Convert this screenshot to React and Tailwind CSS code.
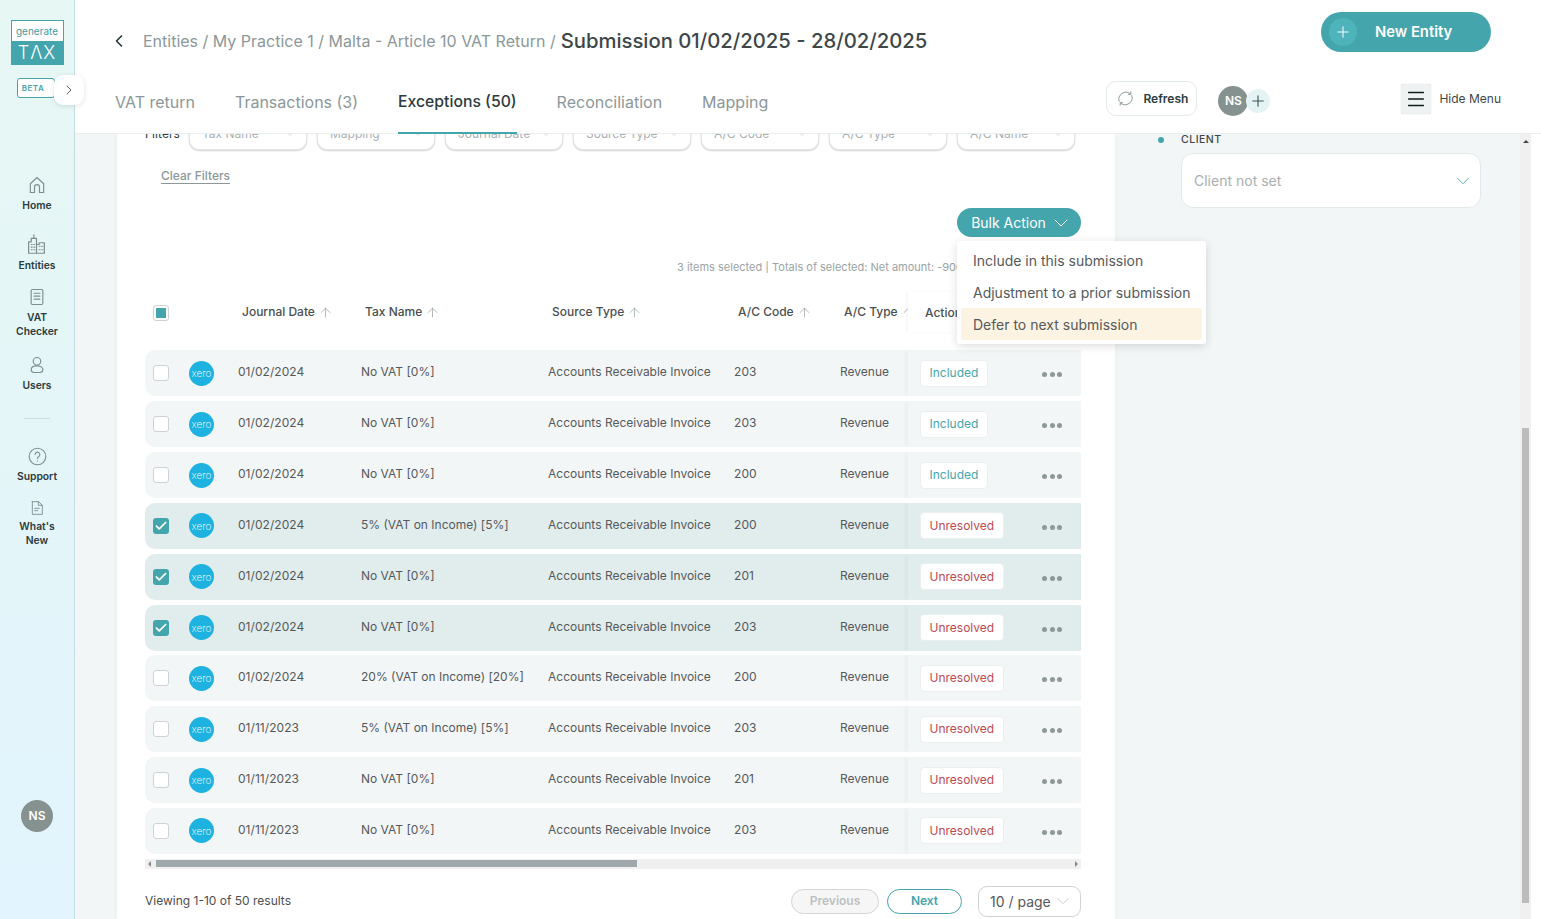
import { ArrowUp, Check, ChevronDown, ChevronLeft, ChevronRight, Menu, Plus } from "lucide-react";

const FILTERS = ["Tax Name", "Mapping", "Journal Date", "Source Type", "A/C Code", "A/C Type", "A/C Name"];

const ROWS = [
  { date: "01/02/2024", tax: "No VAT [0%]", code: "203", status: "Included" },
  { date: "01/02/2024", tax: "No VAT [0%]", code: "203", status: "Included" },
  { date: "01/02/2024", tax: "No VAT [0%]", code: "200", status: "Included" },
  { date: "01/02/2024", tax: "5% (VAT on Income) [5%]", code: "200", status: "Unresolved", checked: true },
  { date: "01/02/2024", tax: "No VAT [0%]", code: "201", status: "Unresolved", checked: true },
  { date: "01/02/2024", tax: "No VAT [0%]", code: "203", status: "Unresolved", checked: true },
  { date: "01/02/2024", tax: "20% (VAT on Income) [20%]", code: "200", status: "Unresolved" },
  { date: "01/11/2023", tax: "5% (VAT on Income) [5%]", code: "203", status: "Unresolved" },
  { date: "01/11/2023", tax: "No VAT [0%]", code: "201", status: "Unresolved" },
  { date: "01/11/2023", tax: "No VAT [0%]", code: "203", status: "Unresolved" },
];

const COLS = "grid grid-cols-[44px_49px_123px_187px_186px_106px_68px_173px] items-center";

function NavIcon({ className, children }) {
  return (
    <svg viewBox="0 0 24 24" fill="none" stroke="#7f8f91" strokeWidth="1.4" strokeLinecap="round" strokeLinejoin="round" className={className}>
      {children}
    </svg>
  );
}

function NavItem({ icon, lines, className }) {
  return (
    <div className={`flex flex-col items-center ${className}`}>
      {icon}
      <div className="mt-[3px] text-center text-[10.3px] font-semibold leading-[14px] text-[#2c3b3d]">
        {lines.map((l) => (
          <div key={l}>{l}</div>
        ))}
      </div>
    </div>
  );
}

function Sidebar() {
  return (
    <aside className="relative z-20 flex h-full w-[75px] shrink-0 flex-col items-center border-r border-[#c4dee4] bg-gradient-to-b from-[#e7f7f4] to-[#e2f4fd]">
      <div className="mt-[20px] w-[53px] border border-[#45a5ad]">
        <div className="flex h-[20px] items-center justify-center bg-white text-[10px] leading-none text-[#3f9aa2]">generate</div>
        <div className="flex h-[23px] items-center justify-center bg-[#45a5ad] text-[18px] font-light leading-none tracking-[1px] text-white">TΛX</div>
      </div>
      <div className="mt-[13px] ml-[17px] flex h-[20px] w-[38px] items-center justify-center self-start rounded-[3px] border border-[#45a5ad] bg-white pr-[6px] text-[8px] font-semibold tracking-[0.5px] text-[#45a5ad]">
        BETA
      </div>
      <div className="absolute left-[54px] top-[75px] flex h-[30px] w-[30px] items-center justify-center rounded-[9px] bg-white shadow-[0_1px_5px_rgba(0,0,0,0.12)]">
        <ChevronRight className="h-[16px] w-[16px] text-[#4a5557]" strokeWidth={1.4} />
      </div>

      <NavItem
        className="mt-[77px]"
        lines={["Home"]}
        icon={
          <NavIcon className="h-[20px] w-[20px]">
            <path d="M4 21V10.5L12 3l8 7.5V21h-5v-6.5a3 3 0 0 0-6 0V21H4z" />
          </NavIcon>
        }
      />
      <NavItem
        className="mt-[22px]"
        lines={["Entities"]}
        icon={
          <NavIcon className="h-[21px] w-[21px]">
            <path d="M9 1v4M6 5h6v17H3V9h3V5zM12 22V12h3v-2h6v12h-9z" />
            <path d="M6 12h1M9 12h1M6 15h1M9 15h1M6 18h1M9 18h1M15 14h1M18 14h1M15 18h1M18 18h1" />
          </NavIcon>
        }
      />
      <NavItem
        className="mt-[15px]"
        lines={["VAT", "Checker"]}
        icon={
          <NavIcon className="h-[20px] w-[20px]">
            <rect x="5" y="3" width="14" height="18" rx="1.5" />
            <path d="M8.5 7.5h7M8.5 11h7M8.5 14.5h7" />
          </NavIcon>
        }
      />
      <NavItem
        className="mt-[17px]"
        lines={["Users"]}
        icon={
          <NavIcon className="h-[20px] w-[20px]">
            <circle cx="12" cy="7.5" r="4.5" />
            <path d="M12 13c-4.5 0-7 2-7 4.5 0 2 1.5 3.5 3.5 3.5h7c2 0 3.5-1.5 3.5-3.5 0-2.5-2.5-4.5-7-4.5z" />
          </NavIcon>
        }
      />
      <div className="mt-[26px] h-px w-[26px] bg-[#c8dfe3]" />
      <NavItem
        className="mt-[28px]"
        lines={["Support"]}
        icon={
          <NavIcon className="h-[19px] w-[19px]">
            <circle cx="12" cy="12" r="10.5" />
            <path d="M9 9.5a3 3 0 1 1 4.6 2.5c-1 .6-1.6 1.2-1.6 2.5M12 17.5v.2" />
          </NavIcon>
        }
      />
      <NavItem
        className="mt-[17px]"
        lines={["What's", "New"]}
        icon={
          <NavIcon className="h-[16px] w-[16px]">
            <path d="M5 2.5h9.5L20 8v13.5H5v-19z" />
            <path d="M14 2.5V8h6M8.5 12.5h7M8.5 16h4.5" />
          </NavIcon>
        }
      />

      <div className="mt-auto mb-[87px] flex h-[32px] w-[32px] items-center justify-center rounded-full bg-[#869290] text-[12px] font-semibold text-white">NS</div>
    </aside>
  );
}

function Header() {
  return (
    <header className="relative z-10 h-[134px] shrink-0 border-b border-[#e9eded] bg-white">
      <div className="flex h-[81px] items-start pl-[35px] pr-[50px]">
        <div className="mt-[26px] flex items-center">
          <ChevronLeft className="-ml-[1px] mr-[14px] h-[20px] w-[20px] text-[#26393c]" strokeWidth={2} />
          <span className="text-[16px] text-[#8b9799]">Entities / My Practice 1 / Malta - Article 10 VAT Return /</span>
          <span className="ml-[5px] text-[20.25px] font-medium text-[#3d4749]">Submission 01/02/2025 - 28/02/2025</span>
        </div>
        <button className="mt-[12px] ml-auto flex h-[40px] w-[170px] items-center rounded-full bg-[#45a5ad] pl-[8px] text-[14.8px] font-semibold text-white">
          <span className="flex h-[28px] w-[28px] items-center justify-center rounded-full bg-[#4fb3bc]">
            <Plus className="h-[18px] w-[18px]" strokeWidth={1.3} />
          </span>
          <span className="ml-[18px]">New Entity</span>
        </button>
      </div>
      <div className="flex h-[53px] items-start pl-[40px] pr-[40px]">
        <nav className="relative flex h-[53px] items-start gap-[40px] pt-[9px] text-[16px] text-[#8b9799]">
          <span>VAT return</span>
          <span>Transactions (3)</span>
          <span className="relative h-[44px] border-b-[2px] border-[#45a5ad] text-[15.75px] font-medium leading-[24px] text-[#2c3b3d]">Exceptions (50)</span>
          <span>Reconciliation</span>
          <span>Mapping</span>
        </nav>
        <button className="ml-auto flex h-[35px] w-[91px] items-center rounded-[10px] border border-[#e3eaea] pl-[10px] text-[12px] font-semibold text-[#2c3b3d]">
          <svg viewBox="0 0 24 24" fill="none" stroke="#8b9799" strokeWidth="1.4" className="h-[17px] w-[17px]">
            <path d="M19 5.5A10 10 0 0 0 3.2 16.5M5 18.5A10 10 0 0 0 20.8 7.5" />
            <path d="M19.5 2v4h-4M4.5 22v-4h4" />
          </svg>
          <span className="ml-[9px]">Refresh</span>
        </button>
        <div className="ml-[21px] mt-[5px] flex items-center">
          <div className="flex h-[30px] w-[30px] items-center justify-center rounded-full bg-[#869290] text-[12px] font-semibold text-white">NS</div>
          <div className="-ml-[2px] flex h-[24px] w-[24px] items-center justify-center rounded-full bg-[#e5f3f5]">
            <Plus className="h-[18px] w-[18px] text-[#3d5456]" strokeWidth={1.5} />
          </div>
        </div>
        <div className="ml-[131px] mt-[3px] flex h-[30px] w-[30px] items-center justify-center rounded-[3px] bg-[#eef2f2] shadow-[0_0_1px_rgba(0,0,0,0.3)]">
          <Menu className="h-[22px] w-[22px] text-[#111a1c]" strokeWidth={1.7} />
        </div>
        <span className="ml-[8px] mt-[9px] text-[12px] text-[#3d4749]">Hide Menu</span>
      </div>
    </header>
  );
}

function Checkbox({ checked, partial }) {
  if (checked) {
    return (
      <div className="flex h-[16px] w-[16px] items-center justify-center rounded-[3px] bg-[#45a5ad]">
        <Check className="h-[14px] w-[14px] text-white" strokeWidth={3} />
      </div>
    );
  }
  return (
    <div className="flex h-[16px] w-[16px] items-center justify-center rounded-[3px] border border-[#cdd3d5] bg-white">
      {partial && <div className="h-[10px] w-[10px] bg-[#45a5ad]" />}
    </div>
  );
}

function XeroBadge() {
  return (
    <div className="flex h-[25px] w-[25px] items-center justify-center rounded-full bg-[#1eb2e0] text-[10px] font-extralight leading-none text-white">xero</div>
  );
}

function HeadCell({ label }) {
  return (
    <div className="flex items-center overflow-hidden whitespace-nowrap pl-[4px] text-[12px] font-medium text-[#4a4f51]">
      {label}
      <ArrowUp className="ml-[3px] h-[15px] w-[15px] shrink-0 text-[#9aa3a5]" strokeWidth={1.2} />
    </div>
  );
}

function Row({ row }) {
  const included = row.status === "Included";
  return (
    <div className={`${COLS} mb-[4.85px] h-[46px] overflow-hidden rounded-l-[10px] text-[12px] text-[#55595b] ${row.checked ? "bg-[#e1eded]" : "bg-[#f3f6f7]"}`}>
      <div className="pl-[8px]">
        <Checkbox checked={row.checked} />
      </div>
      <XeroBadge />
      <div className="-mt-[2px] tracking-[0.05px]">{row.date}</div>
      <div className="-mt-[2px]">{row.tax}</div>
      <div className="-mt-[2px] whitespace-nowrap">Accounts Receivable Invoice</div>
      <div className="-mt-[2px] tracking-[0.1px]">{row.code}</div>
      <div className="-mt-[2px]">Revenue</div>
      <div className={`grid h-full grid-cols-[134px_1fr] items-center pl-[12px] shadow-[-3px_0_4px_rgba(0,0,0,0.03)] ${row.checked ? "bg-[#e1eded]" : "bg-[#f3f6f7]"}`}>
        <div>
          <span className={`inline-flex h-[27px] items-center rounded-[4px] border border-[#eaeff0] bg-white px-[8.5px] text-[12px] ${included ? "text-[#45a5ad]" : "text-[#bd4a52]"}`}>
            {row.status}
          </span>
        </div>
        <div className="mt-[3px] -ml-[12px] flex gap-[2.5px]">
          <span className="h-[5px] w-[5px] rounded-full bg-[#8f9899]" />
          <span className="h-[5px] w-[5px] rounded-full bg-[#8f9899]" />
          <span className="h-[5px] w-[5px] rounded-full bg-[#8f9899]" />
        </div>
      </div>
    </div>
  );
}

function BulkMenu() {
  return (
    <div className="absolute right-[-125px] top-[33px] z-10 w-[249px] rounded-[3px] bg-white px-[4px] pt-[3px] pb-[4px] text-[14px] text-[#55595b] shadow-[0_2px_10px_rgba(0,0,0,0.14)]">
      <div className="flex h-[32px] items-center px-[12px]">Include in this submission</div>
      <div className="flex h-[32px] items-center whitespace-nowrap px-[12px]">Adjustment to a prior submission</div>
      <div className="flex h-[32px] items-center rounded-[3px] bg-[#fdf3e2] px-[12px]">Defer to next submission</div>
    </div>
  );
}

function Table() {
  return (
    <section className="w-[999px] shrink-0 border-l border-[#eef1f1] bg-white pl-[28px] pr-[34px] shadow-[0_0_4px_rgba(0,0,0,0.04)]">
      <div className="-mt-[16px] flex h-[32px] items-center">
        <span className="w-[44px] text-[12px] text-[#2c3b3d]">Filters</span>
        <div className="flex gap-[10px]">
          {FILTERS.map((f) => (
            <div key={f} className="flex h-[32px] w-[118px] items-center justify-between rounded-[10px] border border-[#e3e6e6] bg-white pl-[12px] pr-[10px] text-[12px] text-[#a9b0b1] shadow-[0_1px_2px_rgba(0,0,0,0.18)]">
              {f}
              <ChevronDown className="h-[12px] w-[12px] text-[#c3c9ca]" strokeWidth={1.3} />
            </div>
          ))}
        </div>
      </div>

      <div className="mt-[18px] pl-[16px] text-[12px] font-medium leading-[16px] text-[#8b9799]">
        <span className="border-b border-[#8b9799]">Clear Filters</span>
      </div>

      <div className="relative mt-[24px] flex h-[29px] justify-end">
        <button className="flex h-[29px] w-[124px] items-center justify-center gap-[3px] rounded-full bg-[#45a5ad] pl-[6px] text-[14px] text-white">
          Bulk Action
          <ChevronDown className="h-[24px] w-[24px]" strokeWidth={1} />
        </button>
        <BulkMenu />
      </div>

      <div className="mt-[24px] ml-[532px] w-[280px] overflow-hidden whitespace-nowrap text-[11px] leading-[12px] text-[#9aa3a5]">
        3 items selected | Totals of selected: Net amount: -900.00
      </div>

      <div className={`${COLS} mt-[19px] h-[40px]`}>
        <div className="mt-[1px] pl-[8px]">
          <Checkbox partial />
        </div>
        <div />
        <HeadCell label="Journal Date" />
        <HeadCell label="Tax Name" />
        <HeadCell label="Source Type" />
        <HeadCell label="A/C Code" />
        <HeadCell label="A/C Type" />
        <div className="h-full pl-[17px] pt-[12px] text-[12px] font-medium text-[#4a4f51] shadow-[-2px_0_3px_rgba(0,0,0,0.03)]">Action</div>
      </div>

      <div className="mt-[18.4px] mb-[1.6px]">
        {ROWS.map((row, i) => (
          <Row key={i} row={row} />
        ))}
      </div>

      <div className="flex h-[10px] items-center bg-[#f0f0f0]">
        <span className="ml-[3px] h-0 w-0 border-y-[3px] border-r-[3px] border-y-transparent border-r-[#8a8a8a]" />
        <div className="ml-[5px] h-[7px] w-[481px] bg-[#9fa8ad]" />
        <span className="ml-auto mr-[3px] h-0 w-0 border-y-[3px] border-l-[3px] border-y-transparent border-l-[#8a8a8a]" />
      </div>

      <div className="mt-[17px] flex h-[31px] items-center text-[12px] text-[#4a4f51]">
        <span>Viewing 1-10 of 50 results</span>
        <button className="ml-auto h-[25px] w-[88px] rounded-full border border-[#d2d6d6] bg-[#f6f6f6] font-semibold text-[#bcc1c2]">Previous</button>
        <button className="ml-[8px] h-[25px] w-[75px] rounded-full border border-[#45a5ad] font-semibold text-[#45a5ad]">Next</button>
        <div className="ml-[16px] flex h-[31px] w-[103px] items-center justify-between rounded-[9px] border border-[#cfd3d3] pl-[11px] pr-[6px] text-[14px] text-[#55595b]">
          10 / page
          <ChevronDown className="h-[22px] w-[22px] text-[#c3c9ca]" strokeWidth={1} />
        </div>
      </div>
    </section>
  );
}

function ClientPanel() {
  return (
    <aside className="flex-1 pl-[43px]">
      <div className="flex h-[12px] items-center">
        <span className="h-[6px] w-[6px] rounded-full bg-[#45a5ad]" />
        <span className="ml-[17px] text-[10.5px] font-medium tracking-[0.5px] text-[#3d4749]">CLIENT</span>
      </div>
      <div className="ml-[23px] mt-[7px] flex h-[55px] w-[300px] items-center justify-between rounded-[12px] border border-[#e3e9ea] bg-white pl-[12px] pr-[6px] text-[14px] text-[#a9aeb0]">
        Client not set
        <ChevronDown className="h-[22px] w-[22px] text-[#45a5ad]" strokeWidth={0.9} />
      </div>
    </aside>
  );
}

function PageScrollbar() {
  return (
    <div className="flex w-[11px] shrink-0 flex-col items-center bg-[#f0f0f0]">
      <span className="mt-[6px] h-0 w-0 border-x-[3px] border-b-[3px] border-x-transparent border-b-[#444]" />
      <div className="mt-[285px] h-[475px] w-[7px] bg-[#bcbcbc]" />
    </div>
  );
}

export default function App() {
  return (
    <div className="flex h-[919px] w-[1541px] overflow-hidden bg-white font-['Inter',sans-serif]">
      <Sidebar />
      <main className="flex min-w-0 flex-1 flex-col">
        <Header />
        <div className="flex min-h-0 flex-1 overflow-hidden pr-[10px]">
          <div className="flex min-w-0 flex-1 bg-[#f3f6f7] pl-[41px]">
            <Table />
            <ClientPanel />
          </div>
          <PageScrollbar />
        </div>
      </main>
    </div>
  );
}
